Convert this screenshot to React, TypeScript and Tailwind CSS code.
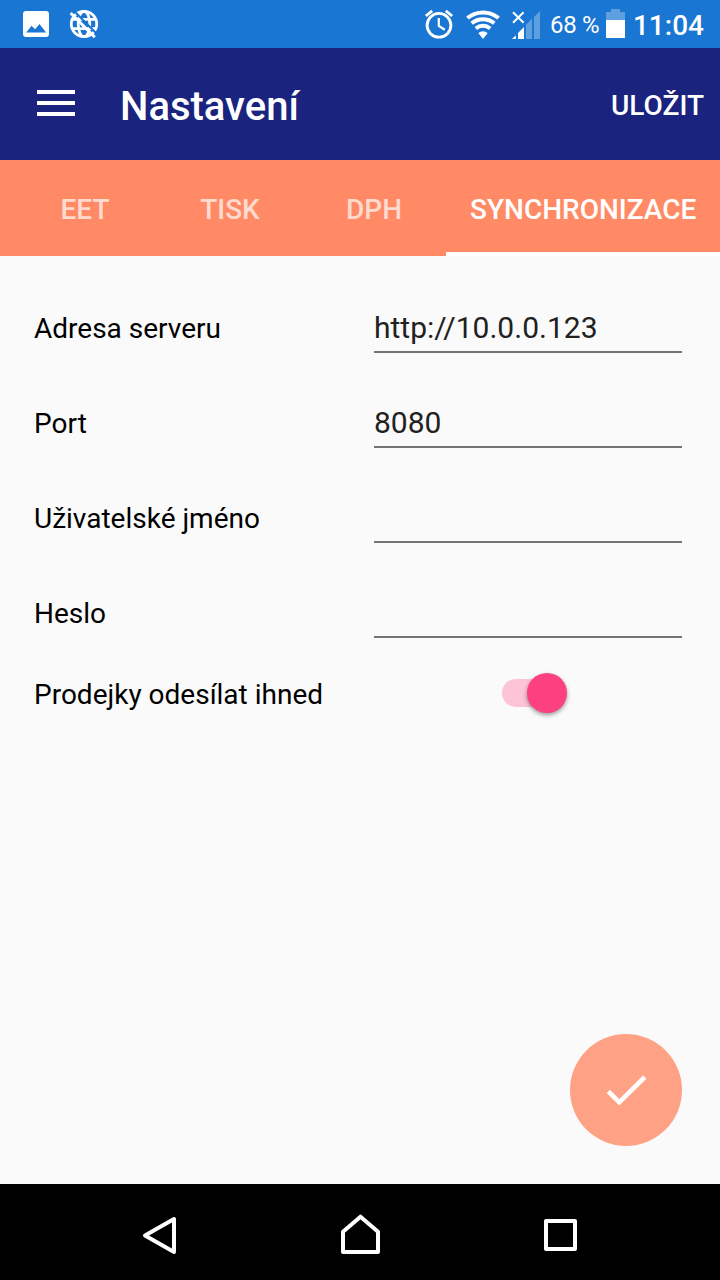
import { useState } from "react";

const tabs = [
  { id: "eet", label: "EET" },
  { id: "tisk", label: "TISK" },
  { id: "dph", label: "DPH" },
  { id: "sync", label: "SYNCHRONIZACE" },
];

const fields = [
  { label: "Adresa serveru", value: "http://10.0.0.123" },
  { label: "Port", value: "8080" },
  { label: "Uživatelské jméno", value: "" },
  { label: "Heslo", value: "" },
];

const StatusBar = () => {
  return (
    <div className="flex h-12 w-full items-start justify-between bg-[#1976d2] text-white">
      <div className="flex">
        <svg width="110" height="48" viewBox="0 0 110 48">
          <path
            fill="#fff"
            fillRule="evenodd"
            d="M26 11h20a3 3 0 0 1 3 3v20a3 3 0 0 1-3 3H26a3 3 0 0 1-3-3V14a3 3 0 0 1 3-3zM26.3 32.5h19.8l-6.6-8.6-4.4 5.3-3.6-3.4z"
          />
          <g fill="none" stroke="#fff" strokeWidth="2.8">
            <circle cx="84" cy="24" r="12.7" />
            <ellipse cx="84" cy="24" rx="5.8" ry="12.7" />
            <path d="M72.5 19.3h23M72.5 28.7h23" />
          </g>
          <path d="M73.5 10.5l24.5 24.5" stroke="#1976d2" strokeWidth="2.2" />
          <path d="M70.6 13l24.2 24.2" stroke="#fff" strokeWidth="3" />
        </svg>
      </div>
      <div className="flex h-12 items-center pr-4">
        <svg width="124" height="48" viewBox="420 0 124 48">
          <g fill="none" stroke="#fff">
            <circle cx="439" cy="25.3" r="11.9" strokeWidth="2.8" />
            <path d="M438.8 18v8l6 3.8" strokeWidth="2.2" />
            <path d="M425.8 16l6.4-5.2M452.2 16l-6.4-5.2" strokeWidth="2.8" />
          </g>
          <g fill="none" stroke="#fff" strokeWidth="3.9">
            <path d="M467.4 18.1a24.5 24.5 0 0 1 31.2 0" />
            <path d="M471.7 23.3a17.8 17.8 0 0 1 22.6 0" />
            <path d="M475.8 28.4a11.3 11.3 0 0 1 14.4 0" />
          </g>
          <path d="M483 39l-4.7-5.9a7.4 7.4 0 0 1 9.4 0z" fill="#fff" />
          <path d="M513 12.3l10.6 10.4M523.6 12.3L513 22.7" stroke="#fff" strokeWidth="2" />
          <path d="M512 39l3.8-3.8V39zM518 39v-6l6-6v12z" fill="#fff" />
          <path d="M526 39V24.8l6-6V39zM534 39V17l6-6v28z" fill="#fff" fillOpacity=".3" />
        </svg>
        <span className="w-[62px] pt-[1px] pl-[6px] text-[24px] leading-[28px] tracking-[-0.3px] whitespace-nowrap">68 %</span>
        <svg width="19" height="48" viewBox="0 0 19 48">
          <path d="M0 12h5V9h9v3h5v8H0z" fill="#fff" fillOpacity=".3" />
          <path d="M0 20h19v18H0z" fill="#fff" />
        </svg>
        <span className="w-[79px] pt-[3px] text-right text-[28px] leading-[32px] font-medium whitespace-nowrap">
          11:04
        </span>
      </div>
    </div>
  );
};

const Toolbar = () => {
  return (
    <div className="flex h-28 items-center bg-[#1a237e] pr-4 pl-[37px] text-white">
      <button className="mb-[2px] flex w-[38px] flex-col gap-[7px]" aria-label="Menu">
        <span className="h-1 w-full bg-white" />
        <span className="h-1 w-full bg-white" />
        <span className="h-1 w-full bg-white" />
      </button>
      <h1 className="ml-[45px] pt-[5px] text-[40px] leading-[48px] font-medium">Nastavení</h1>
      <button className="ml-auto pt-[3px] text-[28px] leading-[32px] font-medium">ULOŽIT</button>
    </div>
  );
};

const NavigationBar = () => {
  return (
    <div className="flex h-24 items-center bg-black">
      <svg width="720" height="96" viewBox="0 1184 720 96" fill="none" stroke="#fff" strokeWidth="4" strokeLinejoin="round">
        <path d="M174 1219v33l-29-16.5z" />
        <path d="M343 1252v-20.3l17.5-15 17.5 15V1252z" />
        <path d="M546 1221h29v28h-29z" />
      </svg>
    </div>
  );
};

const App = () => {
  const [activeTab, setActiveTab] = useState("sync");
  const [sendNow, setSendNow] = useState(true);

  return (
    <div className="flex h-[1280px] w-[720px] flex-col overflow-hidden bg-[#fafafa] font-['Roboto',sans-serif] text-black">
      <StatusBar />
      <Toolbar />
      <div className="flex h-24 bg-[#ff8a65] pl-[13px]">
        {tabs.map((tab) => (
          <button
            key={tab.id}
            onClick={() => setActiveTab(tab.id)}
            className={`min-w-[144px] border-b-4 px-6 pt-[7px] text-[28px] leading-[32px] font-medium first:mr-px last:flex-1 ${activeTab === tab.id ? "border-white text-white" : "border-transparent text-white/70"}`}
          >
            {tab.label}
          </button>
        ))}
      </div>

      <div className="flex flex-1 flex-col pt-[2px] pr-[38px] pl-[34px]">
        {fields.map((field) => (
          <label key={field.label} className="flex h-[95px] items-end">
            <span className="w-[340px] pb-[8px] text-[28px] leading-[32px]">{field.label}</span>
            <input
              defaultValue={field.value}
              className="h-[50px] w-[308px] border-b-2 border-[#737373] bg-transparent text-[30px] leading-[36px] text-[#212121] outline-none"
            />
          </label>
        ))}
        <div className="flex h-[110px] items-center">
          <span className="w-[468px] pt-[3px] text-[28px] leading-[32px]">Prodejky odesílat ihned</span>
          <button
            onClick={() => setSendNow(!sendNow)}
            aria-label="Prodejky odesílat ihned"
            className="flex h-7 w-[60px] items-center rounded-full bg-[#fdc3d7]"
          >
            <span
              className={`size-10 shrink-0 rounded-full bg-[#fc4080] shadow-[0_2px_4px_rgba(0,0,0,0.4)] ${sendNow ? "ml-[25px]" : "-ml-[5px]"}`}
            />
          </button>
        </div>
        <button
          aria-label="Potvrdit"
          className="mt-auto mb-[38px] ml-auto flex size-28 items-center justify-center rounded-full bg-[#ffa184]"
        >
          <svg width="48" height="48" viewBox="0 0 48 48" fill="none" stroke="#fff" strokeWidth="4.6">
            <path d="M6.3 25.3l11 11L42.8 11" />
          </svg>
        </button>
      </div>
      <NavigationBar />
    </div>
  );
};

export default App;
